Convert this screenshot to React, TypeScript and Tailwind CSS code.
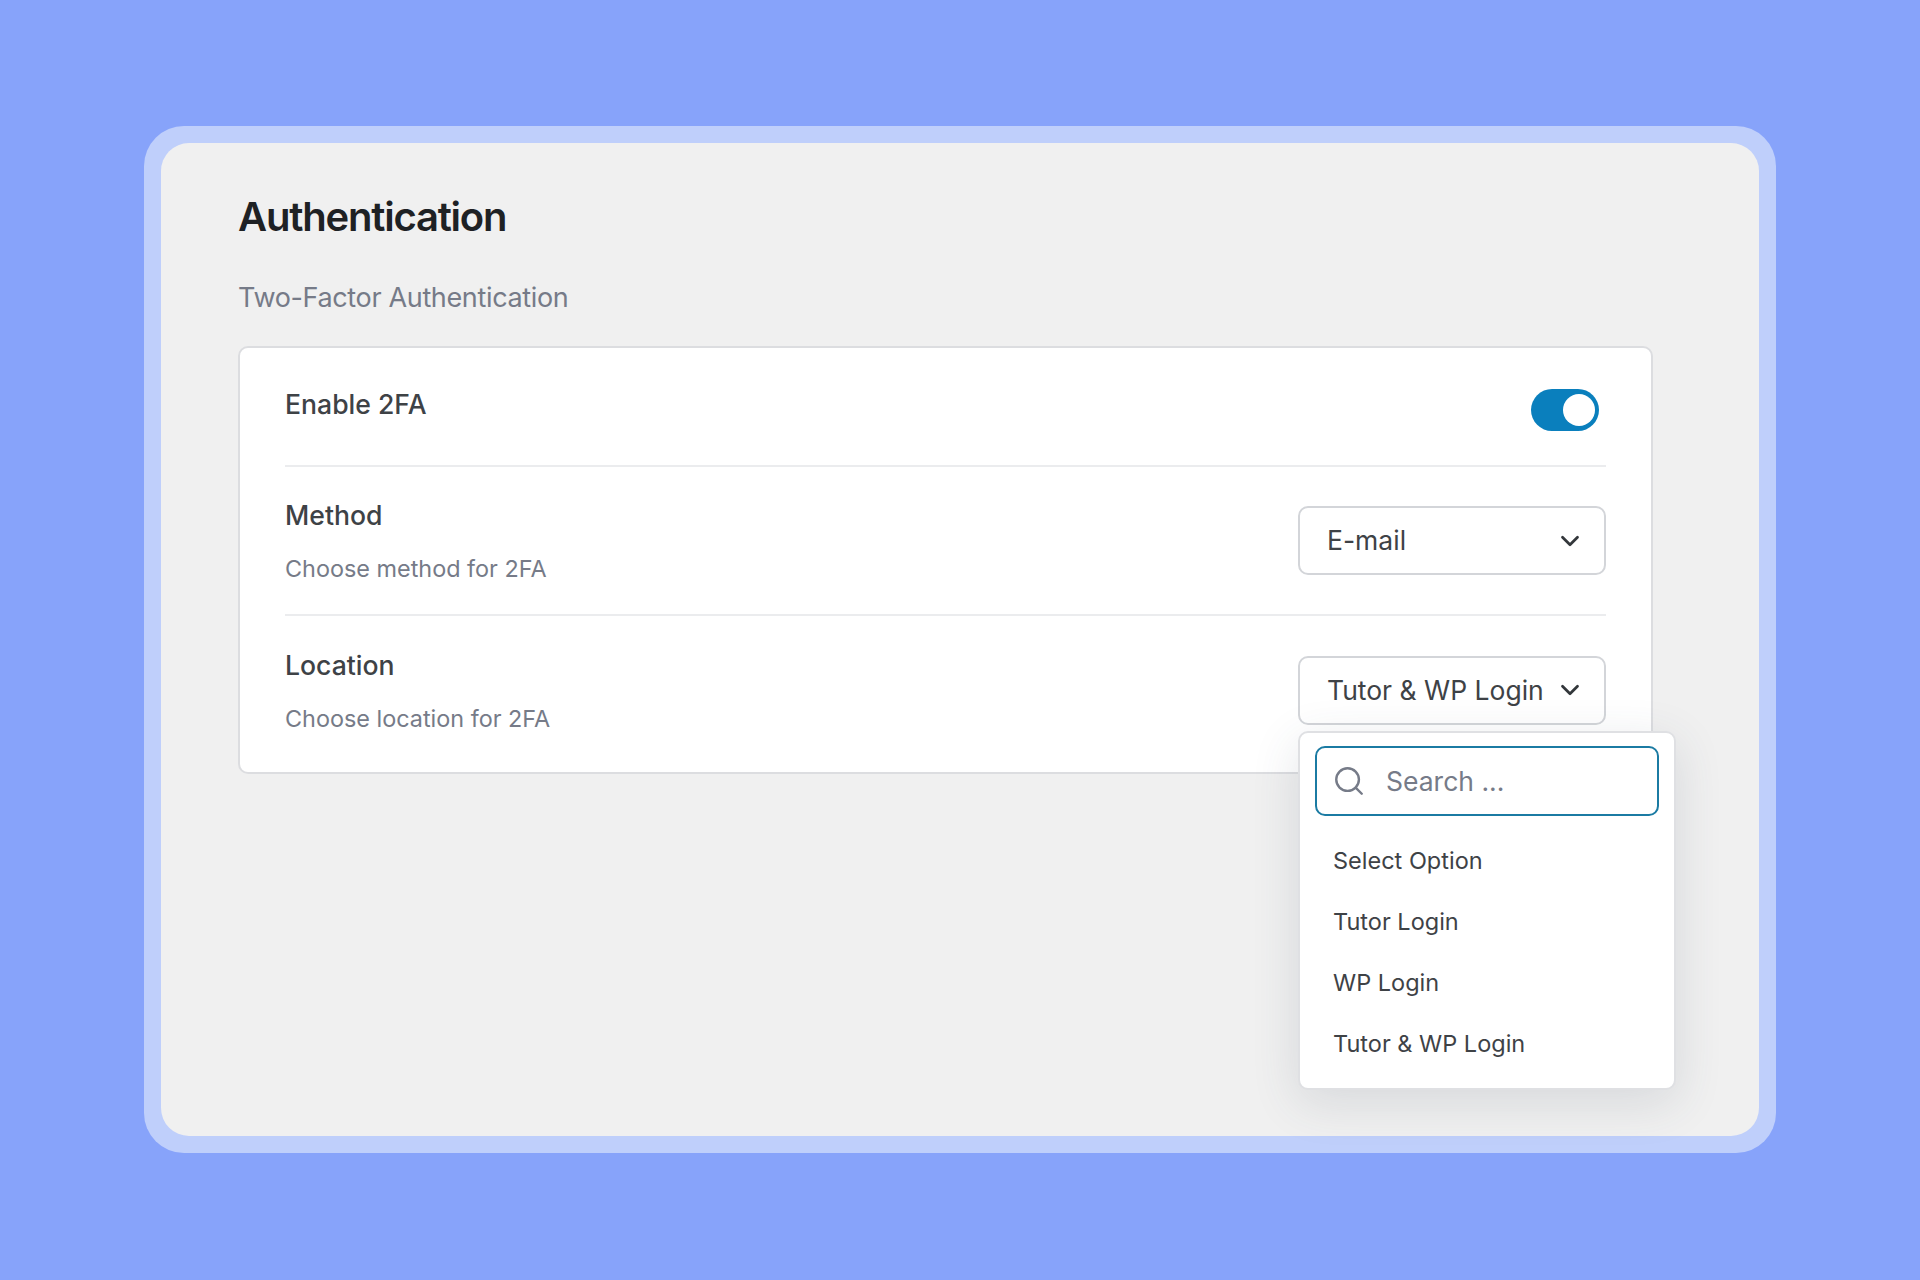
import { ChevronDown, Search } from "lucide-react";

const font = { fontFamily: "Inter, sans-serif" };

const options = ["Select Option", "Tutor Login", "WP Login", "Tutor & WP Login"];

function SelectBox({ value, className }: { value: string; className?: string }) {
    return (
        <div className={`w-[308px] h-[69px] shrink-0 flex items-center justify-between pl-[27px] pr-[19px] bg-white border-2 border-[#d3d5d9] rounded-[10px] ${className ?? ""}`}>
            <span className="pt-[1px] text-[26.5px] text-[#3e4246]">{value}</span>
            <ChevronDown size={30} strokeWidth={2.2} className="text-[#33373b]" />
        </div>
    );
}

export default function App() {
    return (
        <div
            className="min-h-[1280px] bg-[#87a3fa] pt-[126px] pl-[144px]"
            style={font}
        >
            <div className="w-[1632px] h-[1027px] p-[17px] bg-[#bfcffb] rounded-[40px]">
                <div className="h-full bg-[#f0f0f0] rounded-[28px] pl-[77px] pt-[48px]">
                    <h1 className="text-[40px] leading-[52px] font-semibold text-[#1e2124] tracking-[-1.2px]">
                        Authentication
                    </h1>
                    <p className="mt-[37px] text-[27px] leading-[36px] text-[#767b88] tracking-[-0.35px]">
                        Two-Factor Authentication
                    </p>

                    <div className="relative mt-[30px] w-[1415px] h-[428px] bg-white border-2 border-[#dcdde0] rounded-[10px] px-[45px]">
                        <div className="h-[119px] flex justify-between border-b-2 border-[#ebecee]">
                            <span className="mt-[38px] text-[26.6px] leading-[36px] font-medium text-[#3e4246]">
                                Enable 2FA
                            </span>
                            <div className="mt-[41px] mr-[7px] w-[68px] h-[42px] rounded-full bg-[#0a7fbd] flex items-center justify-end pr-[4px]">
                                <div className="w-[32px] h-[32px] rounded-full bg-white" />
                            </div>
                        </div>

                        <div className="h-[149px] flex justify-between items-center border-b-2 border-[#ebecee]">
                            <div className="pt-[3px]">
                                <div className="text-[26.6px] leading-[36px] font-medium text-[#3e4246]">Method</div>
                                <div className="mt-[18px] text-[23.4px] leading-[36px] text-[#767b88]">Choose method for 2FA</div>
                            </div>
                            <SelectBox value="E-mail" />
                        </div>

                        <div className="h-[150px] flex justify-between items-center">
                            <div className="pt-[2px]">
                                <div className="text-[26.6px] leading-[36px] font-medium text-[#3e4246]">Location</div>
                                <div className="mt-[18px] text-[23.4px] leading-[36px] text-[#767b88]">Choose location for 2FA</div>
                            </div>
                            <SelectBox value="Tutor & WP Login" className="mb-[2px]" />
                        </div>

                        <div className="absolute left-[1058px] top-[383px] w-[378px] h-[359px] bg-white border-2 border-[#dfe0e3] rounded-[10px] px-[15px] pt-[13px] shadow-[0_12px_48px_rgba(60,70,90,0.14)]">
                            <div className="h-[70px] flex items-center gap-[20px] pl-[15px] border-2 border-[#1b7ba3] rounded-[10px]">
                                <Search size={34} strokeWidth={1.7} className="text-[#767b88]" />
                                <span className="pt-[1px] text-[26.5px] text-[#767b88]">Search ...</span>
                            </div>
                            <div className="mt-[14px] pl-[18px]">
                                {options.map((o) => (
                                    <div key={o} className="h-[61px] flex items-center text-[23.5px] text-[#3e4246]">
                                        {o}
                                    </div>
                                ))}
                            </div>
                        </div>
                    </div>
                </div>
            </div>
        </div>
    );
}
